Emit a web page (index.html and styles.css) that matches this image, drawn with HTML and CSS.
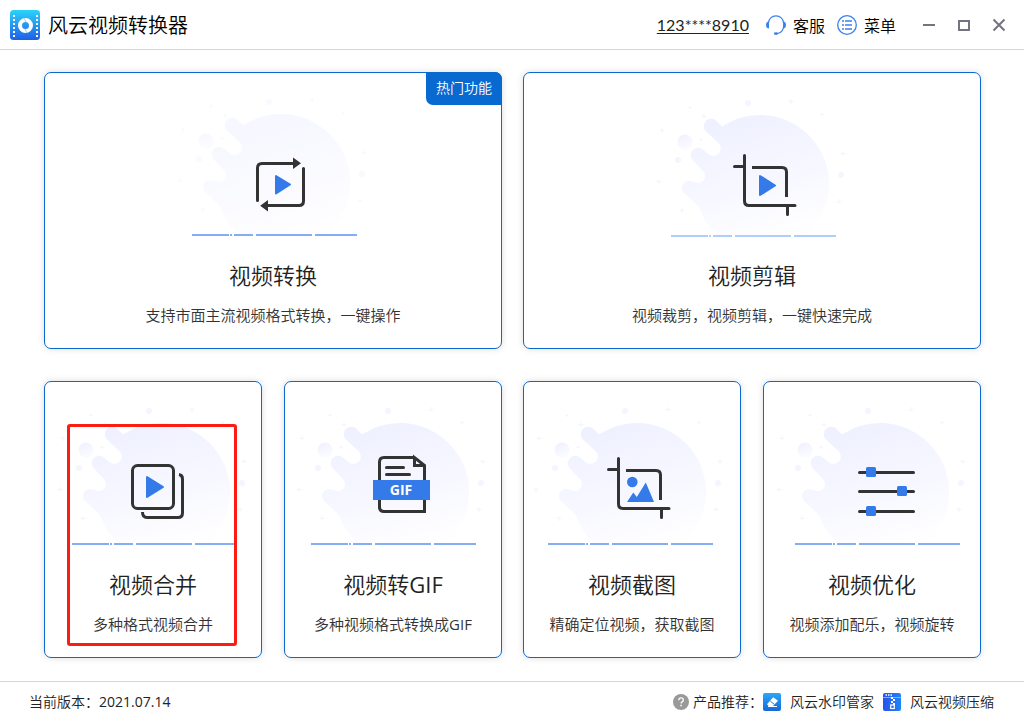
FILE: index.html
```html
<!DOCTYPE html>
<html lang="zh-CN">
<head>
<meta charset="utf-8">
<meta name="viewport" content="width=device-width, initial-scale=1">
<title>风云视频转换器</title>
<link rel="stylesheet" href="styles.css">
</head>
<body>
<svg class="defs" aria-hidden="true">
  <defs>
    <linearGradient id="blob-fill" x1="0.25" y1="0" x2="0.6" y2="1">
      <stop offset="0" stop-color="#eef0ff"/>
      <stop offset="0.55" stop-color="#f6f7ff"/>
      <stop offset="1" stop-color="#fefeff"/>
    </linearGradient>
    <linearGradient id="bubble-fill" x1="0" y1="0" x2="0.4" y2="1">
      <stop offset="0" stop-color="#eef0ff"/>
      <stop offset="1" stop-color="#fbfbff"/>
    </linearGradient>
    <linearGradient id="logo-fill" x1="0" y1="0" x2="0" y2="1">
      <stop offset="0" stop-color="#2bd3fa"/>
      <stop offset="1" stop-color="#1f5fe6"/>
    </linearGradient>
    <linearGradient id="eraser-fill" x1="0" y1="0" x2="0" y2="1">
      <stop offset="0" stop-color="#2ba6f8"/>
      <stop offset="1" stop-color="#1668d8"/>
    </linearGradient>
    <linearGradient id="zip-fill" x1="0" y1="0" x2="1" y2="0">
      <stop offset="0" stop-color="#2a50ea"/>
      <stop offset="1" stop-color="#1c86fb"/>
    </linearGradient>
    <g id="splash">
      <path fill="url(#blob-fill)" d="M79 53.500 73.300 47.700A7.500 7.500 0 0 0 62.700 58.300L75.800 70.400A7.500 7.500 0 0 1 65.200 81L60.300 76.700A7.500 7.500 0 0 0 49.700 87.300L60 98A7 7 0 0 1 50 108L51 110A7 7 0 0 0 41 120L56 134Q62 151 74 162H163.500A69 69 0 0 0 186 111A69 69 0 0 0 117 42A69 69 0 0 0 79 53.500Z"/>
      <circle cx="42" cy="69" r="7.500" fill="url(#bubble-fill)"/>
      <g fill="#f3f6ff"><circle cx="105" cy="30" r="3"/><circle cx="35" cy="87" r="3"/><circle cx="198" cy="102" r="3"/></g>
      <path fill="none" stroke="#f3f4fe" d="M145.500 28.500h5m-2.500-2.500v5M58.500 43.500h5m-2.500-2.500v5M16.500 57.500h5m-2.500-2.500v5M13.500 108.500h5m-2.500-2.500v5M36.500 137.500h5m-2.500-2.500v5M197.500 80.500h5m-2.500-2.500v5M193.500 128.500h5m-2.500-2.500v5M45.500 34.500h3m-1.500-1.500v3M177.500 41.500h3m-1.500-1.500v3M56.500 66.500h3m-1.500-1.500v3"/>
    </g>
    <path id="baseline" d="M28 162h37v2H28zM66 162h2v2h-2zM70 162h19v2H70zM92 162h56v2H92zM151 162h42v2h-42z"/>
  </defs>
</svg>
<div class="app">
  <header class="topbar">
    <div class="brand">
      <svg class="logo" viewBox="0 0 30 30" aria-hidden="true">
        <rect width="30" height="30" rx="3.500" fill="url(#logo-fill)"/>
        <path d="M4 5v22M27 5v22" stroke="#fff" stroke-width="2" stroke-dasharray="2 2"/>
        <circle cx="15.500" cy="15.500" r="5.500" fill="none" stroke="#fff" stroke-width="4"/>
        <path d="M14 8l2 4M17 23l-2-4" stroke="#9ccdf8" stroke-width="1"/>
      </svg>
      <h1 class="brand-name">风云视频转换器</h1>
    </div>
    <nav class="tools">
      <a class="account" href="#account">123****8910</a>
      <button class="tool" type="button">
        <svg class="tool-icon" viewBox="0 0 20 20" fill="none" aria-hidden="true">
          <path d="M2.500 8a7.500 7.200 0 0 1 15 0M17.500 12c-.5 3.500-3 6-6 6.500" stroke="#3a80ee" stroke-width="1.200"/>
          <path d="M3 6.500v7C1 13.500 0 12 0 10S1 6.500 3 6.500ZM17 6.500v7c2 0 3-1.500 3-3.500s-1-3.500-3-3.500Z" fill="#3a80ee"/>
          <ellipse cx="10" cy="18.600" rx="2.200" ry="1.300" fill="#3a80ee"/>
        </svg>
        <span>客服</span>
      </button>
      <button class="tool" type="button">
        <svg class="tool-icon" viewBox="0 0 20 20" fill="none" stroke="#3a80ee" aria-hidden="true">
          <circle cx="10" cy="10" r="9.300" stroke-width="1.300"/>
          <path d="M5 6h2M5 10h2M5 14h2M8 6h7M8 10h7M8 14h7" stroke-width="1.600"/>
        </svg>
        <span>菜单</span>
      </button>
      <div class="window-buttons">
        <button class="window-button" type="button" aria-label="最小化"><svg viewBox="0 0 14 14"><path d="M1 7h12"/></svg></button>
        <button class="window-button" type="button" aria-label="最大化"><svg viewBox="0 0 14 14"><path d="M2 3h10v9H2z"/></svg></button>
        <button class="window-button" type="button" aria-label="关闭"><svg viewBox="0 0 14 14"><path d="M1.500 1.500l11 11M12.500 1.500l-11 11"/></svg></button>
      </div>
    </nav>
  </header>

  <main class="features">
    <div class="halves">
      <button class="card" type="button">
        <span class="hot">热门功能</span>
        <svg class="art" viewBox="1 1 216 170" aria-hidden="true">
          <use href="#splash" opacity="0.500"/><use href="#baseline" fill="#84adf3"/>
          <path class="ink" d="M93.500 128.500V96q0-4.500 4.500-4.500h32M139.500 96.500V129q0 4.500-4.500 4.500h-31"/>
          <path fill="#333" d="M129 85.500 137 91.200 129 97zM104 128 96.200 133.800 104 139.500z"/>
          <path class="play" d="M112 104v17.500L126 112.500z"/>
        </svg>
        <span class="card-title">视频转换</span>
        <span class="card-text">支持市面主流视频格式转换，一键操作</span>
      </button>
      <button class="card" type="button">
        <svg class="art" viewBox="1 1 216 170" aria-hidden="true">
          <use href="#splash" y="1"/><use href="#baseline" y="1" fill="#b1cdf9"/>
          <path class="ink" d="M101.500 83.500V129q0 4.500 4.500 4.500h46M91.500 94.500h10M144.500 134v8.500"/>
          <path class="ink flat" d="M109 95.500h30q4.500 0 4.500 4.500v25"/>
          <path class="play" d="M117 104v19L132 113.500z"/>
        </svg>
        <span class="card-title">视频剪辑</span>
        <span class="card-text">视频裁剪，视频剪辑，一键快速完成</span>
      </button>
    </div>
    <div class="halves">
      <div class="pair">
        <button class="card" type="button">
          <svg class="art" viewBox="1 1 216 170" aria-hidden="true">
            <use href="#splash"/><use href="#baseline" fill="#84adf3"/>
            <rect class="ink" x="88.500" y="84.500" width="41" height="43" rx="5"/>
            <path class="ink flat" d="M135 93.500q3.500.5 3.500 4.500v34q0 4.500-4.500 4.500h-31q-4.500 0-4.500-5.500"/>
            <path class="play" d="M103 96v20L119 106z"/>
          </svg>
          <span class="card-title">视频合并</span>
          <span class="card-text">多种格式视频合并</span>
          <span class="highlight"></span>
        </button>
        <button class="card" type="button">
          <svg class="art" viewBox="1 1 216 170" aria-hidden="true">
            <use href="#splash" x="-1"/><use href="#baseline" x="-1" fill="#84adf3"/>
            <path class="ink flat" d="M130.500 76.500H100q-4.500 0-4.500 4.500v45q0 4.500 4.500 4.500h40.500V84.500l-10-8v8h10"/>
            <path class="ink" d="M102.500 86.500h17M102.500 93.500h23"/>
            <path fill="#357ae9" d="M89 99h57v20H89z"/>
            <text class="gif-label" x="117" y="114" text-anchor="middle">GIF</text>
          </svg>
          <span class="card-title">视频转<span class="latin">GIF</span></span>
          <span class="card-text">多种视频格式转换成<span class="latin">GIF</span></span>
        </button>
      </div>
      <div class="pair">
        <button class="card" type="button">
          <svg class="art" viewBox="1 1 216 170" aria-hidden="true">
            <use href="#splash" x="-3"/><use href="#baseline" x="-3" fill="#84adf3"/>
            <path class="ink" d="M95.500 77.500V123q0 4.500 4.500 4.500h46M85.500 88.500h10M138.500 128v8.500"/>
            <path class="ink flat" d="M103 89.500h30q4.500 0 4.500 4.500v25"/>
            <circle cx="109.300" cy="101" r="5.300" fill="#357ae9"/>
            <path fill="#357ae9" d="M104 121l6.300-9.500 3.500 4.500 9-14.500 8.200 19.500z"/>
          </svg>
          <span class="card-title">视频截图</span>
          <span class="card-text">精确定位视频，获取截图</span>
        </button>
        <button class="card" type="button">
          <svg class="art" viewBox="1 1 216 170" aria-hidden="true">
            <use href="#splash"/><use href="#baseline" x="4" fill="#84adf3"/>
            <path class="ink" d="M96.500 91.500h54M96.500 110.500h54M96.500 130.500h54"/>
            <g fill="#357ae9"><rect x="103" y="86" width="10" height="10" rx="1.500"/><rect x="134" y="105" width="10" height="10" rx="1.500"/><rect x="103" y="125" width="10" height="10" rx="1.500"/></g>
          </svg>
          <span class="card-title">视频优化</span>
          <span class="card-text">视频添加配乐，视频旋转</span>
        </button>
      </div>
    </div>
  </main>

  <footer class="statusbar">
    <span>当前版本：<span class="latin">2021.07.14</span></span>
    <div class="products">
      <svg class="help" viewBox="0 0 16 16" aria-hidden="true">
        <circle cx="8" cy="8" r="8" fill="#999"/>
        <path d="M5.800 6.300q0-2.400 2.300-2.400 2.200 0 2.200 2 0 1.200-1.200 2-1 .7-1 1.700" fill="none" stroke="#fff" stroke-width="1.300"/>
        <path d="M7.300 10.800h1.500v1.500H7.300z" fill="#fff"/>
      </svg>
      <span class="products-label">产品推荐：</span>
      <a class="product" href="#watermark">
        <svg class="product-icon" viewBox="0 0 18 18" aria-hidden="true">
          <rect width="18" height="18" rx="2" fill="url(#eraser-fill)"/>
          <path d="M10.200 4.200 15 7.800 10 13H5.800L4 11.200z" fill="#fff"/>
          <path d="M7.300 8.200l4.200 3.200" stroke="#1f80e4"/><path d="M5 13.500h9" stroke="#fff"/>
        </svg>
        <span>风云水印管家</span>
      </a>
      <a class="product" href="#compress">
        <svg class="product-icon" viewBox="0 0 18 18" aria-hidden="true">
          <rect width="18" height="18" rx="2" fill="url(#zip-fill)"/>
          <path d="M0 4.500h18" stroke="#7fb0ff"/><path d="M2.500 2h7" stroke="#fff" stroke-width="1.500" stroke-dasharray="1.500 1"/>
          <path d="M8 4h2v2H8zM10 6h2v2h-2zM8 8h2v2H8zM10 10h2v2h-2z" fill="#fff"/>
          <rect x="7.700" y="12" width="3.600" height="3.500" fill="none" stroke="#fff" stroke-width="1.200"/>
        </svg>
        <span>风云视频压缩</span>
      </a>
    </div>
  </footer>
</div>
</body>
</html>
```
FILE: styles.css
```css
* {
  box-sizing: border-box;
}

body {
  margin: 0;
  background: #fff;
  color: #222;
  font-family: "Open Sans", "Noto Sans CJK SC", sans-serif;
  font-size: 16px;
  font-weight: 350;
}

button {
  margin: 0;
  padding: 0;
  border: 0;
  background: none;
  color: inherit;
  font: inherit;
  cursor: pointer;
}

a {
  color: inherit;
  text-decoration: none;
}

.defs {
  position: absolute;
  width: 0;
  height: 0;
}

.latin {
  font-weight: 400;
}

.app {
  display: flex;
  flex-direction: column;
  min-height: 100vh;
}

.topbar {
  display: flex;
  align-items: center;
  justify-content: space-between;
  height: 50px;
  padding: 0 18px 0 10px;
  border-bottom: 1px solid #d6d6d6;
}

.brand,
.tools,
.tool,
.window-buttons,
.products,
.product {
  display: flex;
  align-items: center;
}

.brand {
  gap: 8px;
}

.logo {
  width: 30px;
  height: 30px;
}

.brand-name {
  margin: 0;
  padding-top: 2px;
  color: #000;
  font-size: 20px;
  font-weight: 350;
  line-height: 28px;
}

.tools {
  line-height: 24px;
}

.account {
  margin-right: 17px;
  font-family: Lato, "Noto Sans CJK SC", sans-serif;
  font-weight: 400;
  text-decoration: underline;
  text-underline-offset: 2px;
}

.tool {
  gap: 7px;
  margin-right: 12px;
  color: #000;
}

.tool span {
  padding-top: 2px;
}

.tool-icon {
  width: 20px;
  height: 20px;
}

.window-buttons {
  gap: 21px;
  margin-left: 14px;
}

.window-button {
  display: flex;
}

.window-button svg {
  width: 14px;
  height: 14px;
  fill: none;
  stroke: #77727f;
  stroke-width: 2;
}

.features {
  display: flex;
  flex: 1;
  flex-direction: column;
  gap: 32px;
  padding: 22px 43px 23px 44px;
}

.halves,
.pair {
  display: grid;
  grid-template-columns: 1fr 1fr;
}

.halves {
  gap: 21px;
}

.pair {
  gap: 22px;
}

.card {
  position: relative;
  display: flex;
  flex-direction: column;
  align-items: center;
  padding-bottom: 22px;
  border: 1px solid #0a69cd;
  border-radius: 7px;
  background: #fff;
  box-shadow: 0 0 7px rgba(0, 0, 0, 0.14);
}

.art {
  width: 216px;
  height: 170px;
}

.ink {
  fill: none;
  stroke: #333;
  stroke-width: 3;
  stroke-linecap: round;
}

.flat {
  stroke-linecap: butt;
}

.play {
  fill: #357ae9;
  stroke: #357ae9;
  stroke-width: 2;
  stroke-linejoin: round;
}

.gif-label {
  fill: #fff;
  font-size: 14px;
  font-weight: 700;
}

.card-title {
  margin-top: 16px;
  font-size: 22px;
  line-height: 32px;
}

.card-text {
  margin-top: 13px;
  color: #333;
  font-size: 15px;
  line-height: 22px;
}

.hot {
  position: absolute;
  top: -1px;
  right: -1px;
  padding: 0 10px 1px;
  border-radius: 0 7px 0 7px;
  background: #0869d0;
  color: #fff;
  font-size: 14px;
  line-height: 32px;
}

.highlight {
  position: absolute;
  inset: 42px 24px 11px 22px;
  border: 3px solid #fb1d12;
  border-radius: 3px;
}

.statusbar {
  display: flex;
  align-items: center;
  justify-content: space-between;
  height: 39px;
  padding: 1px 30px 0 29px;
  border-top: 1px solid #d6d6d6;
  font-size: 14px;
  line-height: 20px;
}

.help {
  width: 16px;
  height: 16px;
  margin-right: 4px;
}

.product {
  gap: 9px;
}

.product + .product {
  margin-left: 9px;
}

.product-icon {
  width: 18px;
  height: 18px;
}
```
